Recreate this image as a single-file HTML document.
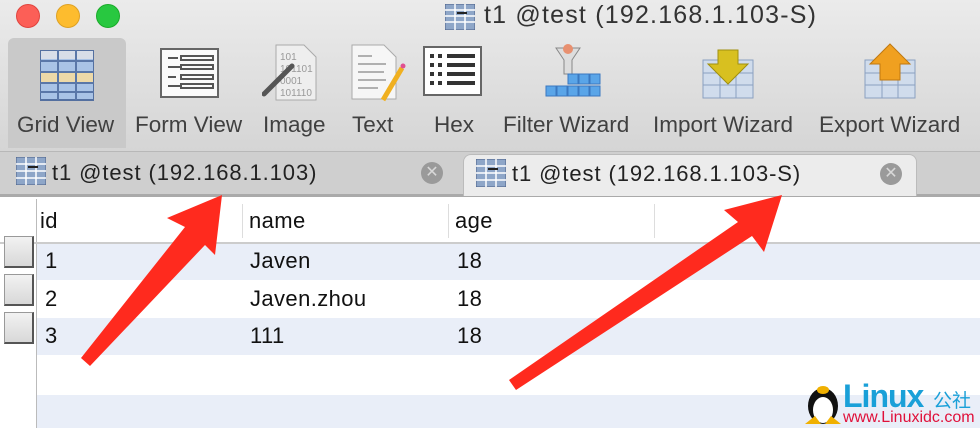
<!DOCTYPE html>
<html><head><meta charset="utf-8"><style>
*{margin:0;padding:0;box-sizing:border-box}
body{width:980px;height:428px;overflow:hidden;position:relative;font-family:"Liberation Sans",sans-serif;background:#fff}
.top{position:absolute;left:0;top:0;width:980px;height:152px;background:linear-gradient(#ebebeb,#d5d5d5);border-bottom:1px solid #b8b8b8}
.dot{position:absolute;top:4px;width:24px;height:24px;border-radius:50%}
.title{position:absolute;left:484px;top:1px;font-size:25px;letter-spacing:1.2px;color:#333}
.tb{position:absolute;top:112px;font-size:22.5px;color:#404040;white-space:nowrap}
.sel{position:absolute;left:8px;top:38px;width:118px;height:110px;background:#c9c9c9;border-radius:6px 6px 0 0}
.tabs{position:absolute;left:0;top:152px;width:980px;height:45px;background:#cfcfcf;border-bottom:3px solid #aaa}
.tab{position:absolute;font-size:22px;letter-spacing:0.9px;color:#222}
.act{position:absolute;left:463px;top:154px;width:454px;height:42px;background:#ececec;border:1px solid #bbb;border-bottom:none;border-radius:8px 8px 0 0}
.x{position:absolute;width:22px;height:22px;border-radius:50%;background:#9a9a9a;color:#d8d8d8;font-size:16px;text-align:center;line-height:22px}
.row{position:absolute;left:37px;width:943px}
.c{position:absolute;font-size:22px;letter-spacing:0.4px;color:#111}
.rh{position:absolute;left:4px;width:30px;height:32px;background:linear-gradient(#f2f2f2,#d8d8d8);border:1px solid #999;border-right:2px solid #555;border-bottom:2px solid #555}
</style></head><body>
<div class="top"></div>
<div class="dot" style="left:16px;background:#fc5f57;border:1px solid #e0443e"></div>
<div class="dot" style="left:56px;background:#fdbc2e;border:1px solid #dea123"></div>
<div class="dot" style="left:96px;background:#28c840;border:1px solid #1aab29"></div>
<svg style="position:absolute;left:445px;top:4px" width="30" height="26"><rect x="0" y="0" width="30" height="26" fill="#8ea6c8" stroke="#4a5f86"/><g stroke="#fff" stroke-width="1.5"><path d="M0 6H30M0 12H30M0 18H30M10 0V26M20 0V26"/></g><path d="M12 9h10" stroke="#222" stroke-width="2"/></svg>
<div class="title">t1 @test (192.168.1.103-S)</div>
<div class="sel"></div>
<svg style="position:absolute;left:40px;top:50px" width="54" height="52"><rect x="0" y="0" width="54" height="50" fill="#a9c3e6" stroke="#5470a0" stroke-width="2"/><rect x="1" y="23" width="52" height="9" fill="#edd9a8"/><rect x="1" y="1" width="52" height="8" fill="#d8dee8"/><g stroke="#5a77a8" stroke-width="2"><path d="M0 11H54M0 22H54M0 33H54M0 42H54M18 0V50M36 0V50"/></g></svg>
<svg style="position:absolute;left:160px;top:48px" width="60" height="52"><rect x="1" y="1" width="57" height="48" fill="#fafafa" stroke="#666" stroke-width="2"/><g stroke="#555" stroke-width="2"><path d="M8 10h10M8 19h12M8 29h8M8 38h12"/><rect x="21" y="8" width="32" height="4" fill="none"/><rect x="21" y="17" width="32" height="4" fill="none"/><rect x="21" y="27" width="32" height="4" fill="none"/><rect x="21" y="36" width="32" height="4" fill="none"/></g></svg>
<svg style="position:absolute;left:262px;top:44px" width="60" height="58"><path d="M14 1h28l12 12v43H14z" fill="#eee" stroke="#aaa"/><text x="18" y="16" font-size="10" fill="#999">101</text><text x="18" y="28" font-size="10" fill="#999">101101</text><text x="18" y="40" font-size="10" fill="#999">0001</text><text x="18" y="52" font-size="10" fill="#999">101110</text><path d="M2 50L30 22" stroke="#555" stroke-width="5" stroke-linecap="round"/></svg>
<svg style="position:absolute;left:350px;top:44px" width="60" height="58"><path d="M2 1h32l12 12v42H2z" fill="#f6f6f6" stroke="#aaa"/><g stroke="#999" stroke-width="1.5"><path d="M8 12h14M8 20h28M8 28h26M8 36h28M8 44h20"/></g><path d="M33 56L52 24" stroke="#f0b020" stroke-width="5"/><circle cx="53" cy="22" r="2.5" fill="#e05090"/></svg>
<svg style="position:absolute;left:423px;top:46px" width="60" height="54"><rect x="1" y="1" width="57" height="48" fill="#fff" stroke="#666" stroke-width="2"/><g fill="#333"><rect x="7" y="8" width="4" height="4"/><rect x="15" y="8" width="4" height="4"/><rect x="7" y="17" width="4" height="4"/><rect x="15" y="17" width="4" height="4"/><rect x="7" y="26" width="4" height="4"/><rect x="15" y="26" width="4" height="4"/><rect x="7" y="35" width="4" height="4"/><rect x="15" y="35" width="4" height="4"/><rect x="24" y="8" width="28" height="4"/><rect x="24" y="17" width="28" height="4"/><rect x="24" y="26" width="28" height="4"/><rect x="24" y="35" width="28" height="4"/></g></svg>
<svg style="position:absolute;left:540px;top:44px" width="64" height="60"><path d="M16 4h24l-8 12v14h-8V16z" fill="#ddd" stroke="#888"/><circle cx="28" cy="5" r="5" fill="#e89070"/><g fill="#5aa5e8" stroke="#3a78c0"><rect x="28" y="30" width="10" height="10"/><rect x="39" y="30" width="10" height="10"/><rect x="50" y="30" width="10" height="10"/><rect x="6" y="42" width="10" height="10"/><rect x="17" y="42" width="10" height="10"/><rect x="28" y="42" width="10" height="10"/><rect x="39" y="42" width="10" height="10"/><rect x="50" y="42" width="10" height="10"/></g></svg>
<svg style="position:absolute;left:700px;top:48px" width="60" height="54"><rect x="3" y="12" width="50" height="38" fill="#d0dcec" stroke="#8aa0c0"/><g stroke="#8aa0c0"><path d="M3 25H53M3 37H53M20 12V50M36 12V50"/></g><path d="M18 2h20v14h10L28 36 8 16h10z" fill="#d8c020" stroke="#a09010"/></svg>
<svg style="position:absolute;left:862px;top:42px" width="60" height="60"><rect x="3" y="18" width="50" height="38" fill="#d0dcec" stroke="#8aa0c0"/><g stroke="#8aa0c0"><path d="M3 31H53M3 43H53M20 18V56M36 18V56"/></g><path d="M28 2l20 20h-10v16H18V22H8z" fill="#f0a020" stroke="#c07810"/></svg>
<div class="tb" style="left:17px">Grid View</div>
<div class="tb" style="left:135px">Form View</div>
<div class="tb" style="left:263px">Image</div>
<div class="tb" style="left:352px">Text</div>
<div class="tb" style="left:434px">Hex</div>
<div class="tb" style="left:503px">Filter Wizard</div>
<div class="tb" style="left:653px">Import Wizard</div>
<div class="tb" style="left:819px">Export Wizard</div>
<div class="tabs"></div>
<div class="act"></div>
<svg style="position:absolute;left:16px;top:157px" width="30" height="28"><rect width="30" height="28" fill="#8ea6c8" stroke="#4a5f86"/><path d="M0 7H30M0 14H30M0 21H30M10 0V28M20 0V28" stroke="#fff" stroke-width="1.5"/><path d="M12 10h10" stroke="#222" stroke-width="2"/></svg>
<div class="tab" style="left:52px;top:160px">t1 @test (192.168.1.103)</div>
<div class="x" style="left:421px;top:162px">✕</div>
<svg style="position:absolute;left:476px;top:159px" width="30" height="28"><rect width="30" height="28" fill="#8ea6c8" stroke="#4a5f86"/><path d="M0 7H30M0 14H30M0 21H30M10 0V28M20 0V28" stroke="#fff" stroke-width="1.5"/><path d="M12 10h10" stroke="#222" stroke-width="2"/></svg>
<div class="tab" style="left:512px;top:161px">t1 @test (192.168.1.103-S)</div>
<div class="x" style="left:880px;top:163px">✕</div>
<div style="position:absolute;left:36px;top:199px;width:1px;height:229px;background:#bbb"></div>
<div style="position:absolute;left:0;top:242px;width:980px;height:2px;background:#ccc"></div>
<div style="position:absolute;left:242px;top:204px;width:1px;height:34px;background:#ddd"></div>
<div style="position:absolute;left:448px;top:204px;width:1px;height:34px;background:#ddd"></div>
<div style="position:absolute;left:654px;top:204px;width:1px;height:34px;background:#ddd"></div>
<div class="c" style="left:40px;top:208px">id</div>
<div class="c" style="left:249px;top:208px">name</div>
<div class="c" style="left:455px;top:208px">age</div>
<div class="row" style="top:244px;height:36px;background:#e9eef8"></div>
<div class="row" style="top:318px;height:37px;background:#e9eef8"></div>
<div class="row" style="top:395px;height:33px;background:#e9eef8"></div>
<div class="rh" style="top:236px"></div><div class="rh" style="top:274px"></div><div class="rh" style="top:312px"></div>
<div class="c" style="left:45px;top:248px">1</div><div class="c" style="left:250px;top:248px">Javen</div><div class="c" style="left:457px;top:248px">18</div>
<div class="c" style="left:45px;top:286px">2</div><div class="c" style="left:250px;top:286px">Javen.zhou</div><div class="c" style="left:457px;top:286px">18</div>
<div class="c" style="left:45px;top:323px">3</div><div class="c" style="left:250px;top:323px">111</div><div class="c" style="left:457px;top:323px">18</div>
<svg style="position:absolute;left:0;top:0" width="980" height="428"><polygon points="222,195 215,255 205,245 90,366 81,358 185,227 167,218" fill="#ff2a1e"/><polygon points="782,195 764,252 752,236 516,390 509,380 738,222 724,210" fill="#ff2a1e"/></svg>
<svg style="position:absolute;left:803px;top:378px" width="40" height="48"><ellipse cx="20" cy="28" rx="15" ry="18" fill="#111"/><ellipse cx="20" cy="32" rx="10" ry="13" fill="#fff"/><ellipse cx="20" cy="12" rx="6" ry="4" fill="#f0b000"/><path d="M2 46l10-8 6 8zM38 46l-10-8-6 8z" fill="#f0b000"/></svg>
<div style="position:absolute;left:843px;top:378px;font-size:32px;font-weight:bold;color:#1aa0d8;letter-spacing:-1px">Linux</div>
<div style="position:absolute;left:933px;top:386px;font-size:19px;color:#1aa0d8;font-family:'Liberation Sans','Noto Sans CJK SC',sans-serif">公社</div>
<div style="position:absolute;left:843px;top:409px;font-size:16px;color:#e0103a">www.Linuxidc.com</div>
</body></html>
